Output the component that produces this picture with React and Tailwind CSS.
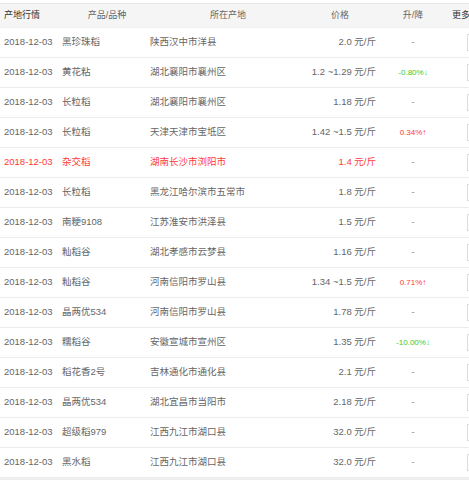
import React from "react";

const rows = [
  ["2018-12-03", "黑珍珠稻", "陕西汉中市洋县", "2.0 元/斤", null],
  ["2018-12-03", "黄花粘", "湖北襄阳市襄州区", "1.2 ~1.29 元/斤", ["-0.80%", "down"]],
  ["2018-12-03", "长粒稻", "湖北襄阳市襄州区", "1.18 元/斤", null],
  ["2018-12-03", "长粒稻", "天津天津市宝坻区", "1.42 ~1.5 元/斤", ["0.34%", "up"]],
  ["2018-12-03", "杂交稻", "湖南长沙市浏阳市", "1.4 元/斤", null, true],
  ["2018-12-03", "长粒稻", "黑龙江哈尔滨市五常市", "1.8 元/斤", null],
  ["2018-12-03", "南粳9108", "江苏淮安市洪泽县", "1.5 元/斤", null],
  ["2018-12-03", "籼稻谷", "湖北孝感市云梦县", "1.16 元/斤", null],
  ["2018-12-03", "籼稻谷", "河南信阳市罗山县", "1.34 ~1.5 元/斤", ["0.71%", "up"]],
  ["2018-12-03", "晶两优534", "河南信阳市罗山县", "1.78 元/斤", null],
  ["2018-12-03", "糯稻谷", "安徽宣城市宣州区", "1.35 元/斤", ["-10.00%", "down"]],
  ["2018-12-03", "稻花香2号", "吉林通化市通化县", "2.1 元/斤", null],
  ["2018-12-03", "晶两优534", "湖北宜昌市当阳市", "2.18 元/斤", null],
  ["2018-12-03", "超级稻979", "江西九江市湖口县", "32.0 元/斤", null],
  ["2018-12-03", "黑水稻", "江西九江市湖口县", "32.0 元/斤", null],
];

const font = { fontFamily: '"Liberation Sans", "Noto Sans CJK SC", sans-serif' };

export default function App() {
  return (
    <div className="w-[469px] h-[480px] overflow-hidden bg-white" style={font}>
      <div className="w-[520px] mt-[3px] border-t border-[#e6e6e6]">
        <div className="grid grid-cols-[58px_88px_154px_80px_66px_74px] h-[24px] items-center bg-[#f5f5f5] text-[9px] text-[#666] border-b border-[#efefef]">
          <div className="pl-[4px] text-[#333]">产地行情</div>
          <div className="text-center pl-[10px]">产品/品种</div>
          <div className="text-center pl-[10px]">所在产地</div>
          <div className="text-center">价格</div>
          <div className="text-center">升/降</div>
          <div className="pl-[6px] text-[#333]">更多行情</div>
        </div>
        {rows.map((r, i) => {
          const hot = r[5];
          const c = hot ? "text-[#ff3a3a]" : "text-[#666]";
          return (
            <div
              key={i}
              className={`grid grid-cols-[58px_88px_154px_80px_66px_74px] h-[30px] items-center border-b border-[#ececec] text-[9.5px] ${c}`}
            >
              <div className="pl-[4px] whitespace-nowrap">{r[0]}</div>
              <div className="pl-[4px] whitespace-nowrap">{r[1]}</div>
              <div className="pl-[4px] whitespace-nowrap">{r[2]}</div>
              <div className="pr-[4px] text-right whitespace-nowrap">{r[3]}</div>
              <div className="text-center whitespace-nowrap">
                {r[4] ? (
                  <span
                    className={`text-[8px] ${
                      r[4][1] === "up" ? "text-[#ff3a3a]" : "text-[#33cc33]"
                    }`}
                  >
                    {r[4][0]}
                    {r[4][1] === "up" ? "↑" : "↓"}
                  </span>
                ) : (
                  <span className="text-[#888]">-</span>
                )}
              </div>
              <div className="pl-[21px] flex items-center">
                <div className="w-[40px] h-[17px] border border-[#dddddd] bg-white"></div>
              </div>
            </div>
          );
        })}
        <div className="h-[4px] bg-[#eeeeee]"></div>
      </div>
    </div>
  );
}
